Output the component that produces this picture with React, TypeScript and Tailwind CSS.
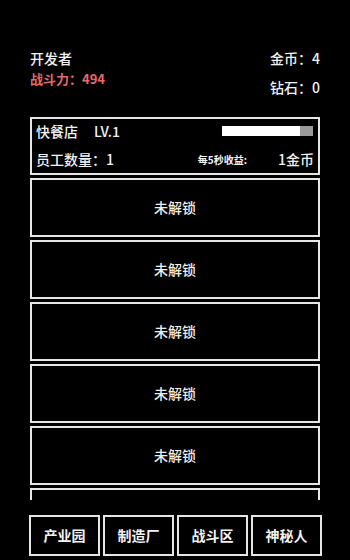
import React from 'react'

const font = { fontFamily: '"Noto Sans CJK SC", "Noto Sans", sans-serif' }

const LockedSlot: React.FC = () => (
  <div className="h-[59px] shrink-0 border-2 border-[#e6e6e6] flex items-center justify-center">
    <span className="text-[14px] font-medium text-[#eeeeee]">未解锁</span>
  </div>
)

const tabs = ['产业园', '制造厂', '战斗区', '神秘人']

export default function App() {
  return (
    <div className="w-[350px] h-[560px] bg-black text-[#f2f2f2] flex flex-col overflow-hidden" style={font}>
      <div className="h-[117px] shrink-0 flex justify-between px-[30px] pt-[48px]">
        <div className="flex flex-col">
          <span className="text-[14px] leading-[20px] font-medium">开发者</span>
          <span className="text-[13px] leading-[18px] font-bold text-[#e56a6a] mt-[2px]">战斗力：494</span>
        </div>
        <div className="flex flex-col items-end">
          <span className="text-[14px] leading-[20px] font-medium">金币：4</span>
          <span className="text-[14px] leading-[20px] font-medium mt-[9px]">钻石：0</span>
        </div>
      </div>

      <div className="mx-[30px] h-[58px] shrink-0 border-2 border-[#e6e6e6] px-[4px] flex flex-col gap-[4px]">
        <div className="flex items-center h-[24px]">
          <span className="text-[14px] font-medium">快餐店</span>
          <span className="text-[14px] font-medium ml-[16px]">LV.1</span>
          <div className="ml-auto mr-[1px] flex h-[10px] w-[91px]">
            <div className="w-[78px] bg-white" />
            <div className="flex-1 bg-[#9a9a9a]" />
          </div>
        </div>
        <div className="flex items-center h-[24px]">
          <span className="text-[14px] font-medium">员工数量：1</span>
          <span className="text-[10px] font-bold ml-auto">每5秒收益:</span>
          <span className="text-[14px] font-medium ml-[31px]">1金币</span>
        </div>
      </div>

      <div className="mx-[30px] mt-[3px] h-[322px] shrink-0 overflow-hidden flex flex-col gap-[3px]">
        {[0, 1, 2, 3, 4, 5].map((i) => (
          <LockedSlot key={i} />
        ))}
      </div>

      <div className="flex gap-[3px] pl-[29px] pr-[28px] mt-[15px]">
        {tabs.map((t) => (
          <div key={t} className="flex-1 h-[41px] border-2 border-[#e6e6e6] flex items-center justify-center">
            <span className="text-[14px] font-bold">{t}</span>
          </div>
        ))}
      </div>
    </div>
  )
}
